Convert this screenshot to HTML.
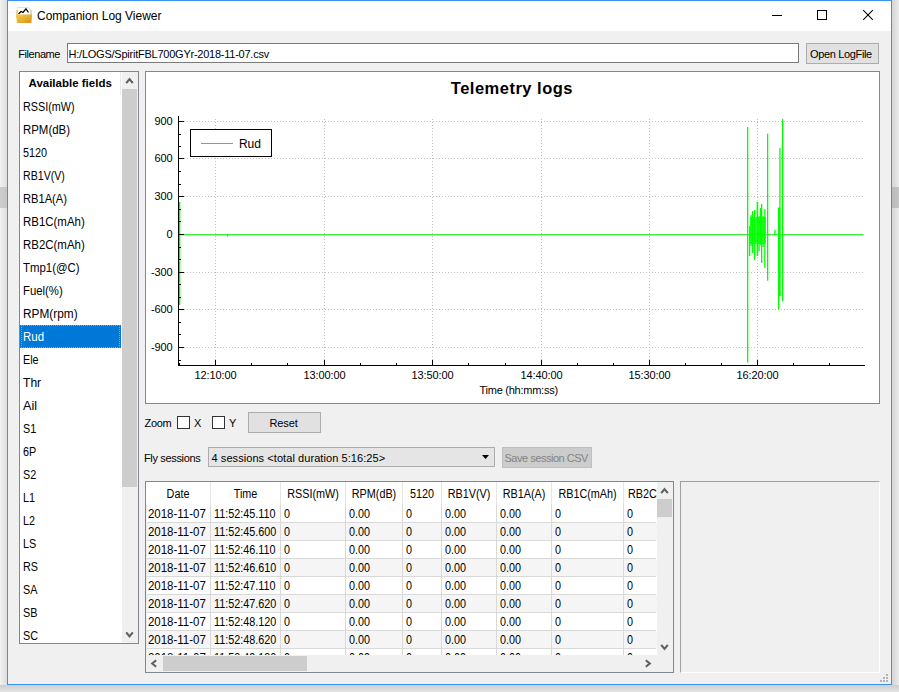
<!DOCTYPE html>
<html><head><meta charset="utf-8"><style>
html,body{margin:0;padding:0;width:899px;height:692px;overflow:hidden;position:relative;font-family:"Liberation Sans", sans-serif}
.t{position:absolute;white-space:nowrap;font-family:"Liberation Sans", sans-serif}
</style></head><body>
<div style="position:absolute;left:0;top:0;width:899px;height:692px;background:#e9e9e9"></div>
<div style="position:absolute;left:0;top:0;width:7px;height:692px;background:linear-gradient(to right,#f1f1f1,#dedede)"></div>
<div style="position:absolute;left:0;top:187px;width:7px;height:21px;background:linear-gradient(to right,#cdcdcd,#c6c6c6)"></div>
<div style="position:absolute;left:892px;top:0;width:7px;height:692px;background:linear-gradient(to right,#d4d4d4,#ebebeb)"></div>
<div style="position:absolute;left:892px;top:187px;width:7px;height:21px;background:linear-gradient(to right,#b8b8b8,#c6c6c6)"></div>
<div style="position:absolute;left:0;top:685px;width:899px;height:7px;background:linear-gradient(to bottom,#cecece,#e4e4e4)"></div>
<div style="position:absolute;left:7px;top:0px;width:885px;height:685px;background:#3a92f2"></div>
<div style="position:absolute;left:8px;top:1px;width:883px;height:30px;background:#fff"></div>
<div style="position:absolute;left:8px;top:31px;width:883px;height:653px;background:#f0f0f0"></div>
<svg style="position:absolute;left:14px;top:5px" width="20" height="20" viewBox="0 0 20 20">
<defs><linearGradient id="fg" x1="0" y1="0" x2="1" y2="1"><stop offset="0" stop-color="#f2d24a"/><stop offset="1" stop-color="#dc8f16"/></linearGradient></defs>
<rect x="2.5" y="5" width="15" height="8" fill="#e6a82a"/>
<path d="M3.5 2.5 H14.5 L16.5 5 V10 H3.5 Z" fill="#fff" stroke="#cfcfcf" stroke-width="0.6"/>
<path d="M4.5 9 L7 6.5 L9 7.5 L12 3.8 L14.5 7.5" fill="none" stroke="#000" stroke-width="1.2"/>
<path d="M2 9.5 H18 L17.4 18 H3 Z" fill="url(#fg)"/>
</svg>
<div class="t" style="left:37.00px;top:9.84px;font-size:12px;line-height:12px;font-weight:400;color:#000;letter-spacing:0px;">Companion Log Viewer</div>
<div style="position:absolute;left:772px;top:15px;width:10px;height:1px;background:#000"></div>
<div style="position:absolute;left:817px;top:10px;width:8px;height:8px;border:1px solid #000"></div>
<svg style="position:absolute;left:862px;top:9px" width="13" height="13" viewBox="0 0 13 13"><path d="M1.2 1.2 L10.8 10.8 M10.8 1.2 L1.2 10.8" stroke="#000" stroke-width="1.05"/></svg>
<div class="t" style="left:18.30px;top:48.69px;font-size:11px;line-height:11px;font-weight:400;color:#000;letter-spacing:-0.45px;">Filename</div>
<div style="position:absolute;left:67px;top:43px;width:730px;height:18px;background:#fff;border:1px solid #7a7a7a"></div>
<div class="t" style="left:68.60px;top:48.69px;font-size:11px;line-height:11px;font-weight:400;color:#000;letter-spacing:-0.24px;">H:/LOGS/SpiritFBL700GYr-2018-11-07.csv</div>
<div style="position:absolute;left:806px;top:43px;width:71px;height:19px;background:#e1e1e1;border:1px solid #adadad"></div>
<div class="t" style="left:810.00px;top:48.69px;font-size:11px;line-height:11px;font-weight:400;color:#000;letter-spacing:-0.35px;">Open LogFile</div>
<div style="position:absolute;left:19px;top:71px;width:118px;height:571px;background:#fff;border:1px solid #828790"></div>
<div class="t" style="left:28.50px;top:77.87px;font-size:11.5px;line-height:11.5px;font-weight:700;color:#000;letter-spacing:0px;">Available fields</div>
<div style="position:absolute;left:120px;top:72px;width:1px;height:23px;background:#e8e8e8"></div>
<div style="position:absolute;left:122px;top:72px;width:16px;height:571px;background:#f0f0f0"></div>
<div style="position:absolute;left:122px;top:89px;width:15px;height:398px;background:#cdcdcd"></div>
<div class="t" style="left:23.00px;top:100.64px;font-size:12px;line-height:12px;font-weight:400;color:#000;letter-spacing:0px;transform:scaleX(0.9);transform-origin:0 0;">RSSI(mW)</div>
<div class="t" style="left:23.00px;top:123.64px;font-size:12px;line-height:12px;font-weight:400;color:#000;letter-spacing:0px;transform:scaleX(0.9522);transform-origin:0 0;">RPM(dB)</div>
<div class="t" style="left:23.00px;top:146.64px;font-size:12px;line-height:12px;font-weight:400;color:#000;letter-spacing:0px;transform:scaleX(0.9);transform-origin:0 0;">5120</div>
<div class="t" style="left:23.00px;top:169.64px;font-size:12px;line-height:12px;font-weight:400;color:#000;letter-spacing:0px;transform:scaleX(0.8847);transform-origin:0 0;">RB1V(V)</div>
<div class="t" style="left:23.00px;top:192.64px;font-size:12px;line-height:12px;font-weight:400;color:#000;letter-spacing:0px;transform:scaleX(0.927);transform-origin:0 0;">RB1A(A)</div>
<div class="t" style="left:23.00px;top:215.64px;font-size:12px;line-height:12px;font-weight:400;color:#000;letter-spacing:0px;transform:scaleX(0.9540000000000001);transform-origin:0 0;">RB1C(mAh)</div>
<div class="t" style="left:23.00px;top:238.64px;font-size:12px;line-height:12px;font-weight:400;color:#000;letter-spacing:0px;transform:scaleX(0.9540000000000001);transform-origin:0 0;">RB2C(mAh)</div>
<div class="t" style="left:23.00px;top:261.64px;font-size:12px;line-height:12px;font-weight:400;color:#000;letter-spacing:0px;transform:scaleX(0.9512999999999999);transform-origin:0 0;">Tmp1(@C)</div>
<div class="t" style="left:23.00px;top:284.64px;font-size:12px;line-height:12px;font-weight:400;color:#000;letter-spacing:0px;transform:scaleX(0.9459);transform-origin:0 0;">Fuel(%)</div>
<div class="t" style="left:23.00px;top:307.64px;font-size:12px;line-height:12px;font-weight:400;color:#000;letter-spacing:0px;transform:scaleX(0.9864);transform-origin:0 0;">RPM(rpm)</div>
<div style="position:absolute;left:20px;top:325px;width:101px;height:23px;background:#0078d7"></div>
<div style="position:absolute;left:21px;top:325px;width:97px;height:21px;border:1px dotted #ff8a30"></div>
<div class="t" style="left:23.00px;top:330.64px;font-size:12px;line-height:12px;font-weight:400;color:#fff;letter-spacing:0px;transform:scaleX(0.9540000000000001);transform-origin:0 0;">Rud</div>
<div class="t" style="left:23.00px;top:353.64px;font-size:12px;line-height:12px;font-weight:400;color:#000;letter-spacing:0px;transform:scaleX(0.9);transform-origin:0 0;">Ele</div>
<div class="t" style="left:23.00px;top:376.64px;font-size:12px;line-height:12px;font-weight:400;color:#000;letter-spacing:0px;transform:scaleX(1.0080000000000002);transform-origin:0 0;">Thr</div>
<div class="t" style="left:23.00px;top:399.64px;font-size:12px;line-height:12px;font-weight:400;color:#000;letter-spacing:0px;transform:scaleX(1.053);transform-origin:0 0;">Ail</div>
<div class="t" style="left:23.00px;top:422.64px;font-size:12px;line-height:12px;font-weight:400;color:#000;letter-spacing:0px;transform:scaleX(0.9);transform-origin:0 0;">S1</div>
<div class="t" style="left:23.00px;top:445.64px;font-size:12px;line-height:12px;font-weight:400;color:#000;letter-spacing:0px;transform:scaleX(0.9);transform-origin:0 0;">6P</div>
<div class="t" style="left:23.00px;top:468.64px;font-size:12px;line-height:12px;font-weight:400;color:#000;letter-spacing:0px;transform:scaleX(0.9);transform-origin:0 0;">S2</div>
<div class="t" style="left:23.00px;top:491.64px;font-size:12px;line-height:12px;font-weight:400;color:#000;letter-spacing:0px;transform:scaleX(0.9);transform-origin:0 0;">L1</div>
<div class="t" style="left:23.00px;top:514.64px;font-size:12px;line-height:12px;font-weight:400;color:#000;letter-spacing:0px;transform:scaleX(0.9);transform-origin:0 0;">L2</div>
<div class="t" style="left:23.00px;top:537.64px;font-size:12px;line-height:12px;font-weight:400;color:#000;letter-spacing:0px;transform:scaleX(0.9);transform-origin:0 0;">LS</div>
<div class="t" style="left:23.00px;top:560.64px;font-size:12px;line-height:12px;font-weight:400;color:#000;letter-spacing:0px;transform:scaleX(0.9);transform-origin:0 0;">RS</div>
<div class="t" style="left:23.00px;top:583.64px;font-size:12px;line-height:12px;font-weight:400;color:#000;letter-spacing:0px;transform:scaleX(0.9);transform-origin:0 0;">SA</div>
<div class="t" style="left:23.00px;top:606.64px;font-size:12px;line-height:12px;font-weight:400;color:#000;letter-spacing:0px;transform:scaleX(0.9);transform-origin:0 0;">SB</div>
<div class="t" style="left:23.00px;top:629.64px;font-size:12px;line-height:12px;font-weight:400;color:#000;letter-spacing:0px;transform:scaleX(0.9);transform-origin:0 0;">SC</div>
<div style="position:absolute;left:145px;top:71px;width:733px;height:331px;background:#fff;border:1px solid #828790"></div>
<div class="t" style="left:450.80px;top:80.03px;font-size:16.5px;line-height:16.5px;font-weight:700;color:#000;letter-spacing:0.5px;">Telemetry logs</div>
<div style="position:absolute;left:181px;top:121px;width:683px;height:1px;background:repeating-linear-gradient(to right,#c0c0c0 0 1px,transparent 1px 3px)"></div>
<div style="position:absolute;left:181px;top:158px;width:683px;height:1px;background:repeating-linear-gradient(to right,#c0c0c0 0 1px,transparent 1px 3px)"></div>
<div style="position:absolute;left:181px;top:196px;width:683px;height:1px;background:repeating-linear-gradient(to right,#c0c0c0 0 1px,transparent 1px 3px)"></div>
<div style="position:absolute;left:181px;top:234px;width:683px;height:1px;background:repeating-linear-gradient(to right,#c0c0c0 0 1px,transparent 1px 3px)"></div>
<div style="position:absolute;left:181px;top:272px;width:683px;height:1px;background:repeating-linear-gradient(to right,#c0c0c0 0 1px,transparent 1px 3px)"></div>
<div style="position:absolute;left:181px;top:309px;width:683px;height:1px;background:repeating-linear-gradient(to right,#c0c0c0 0 1px,transparent 1px 3px)"></div>
<div style="position:absolute;left:181px;top:347px;width:683px;height:1px;background:repeating-linear-gradient(to right,#c0c0c0 0 1px,transparent 1px 3px)"></div>
<div style="position:absolute;left:215px;top:119px;width:1px;height:245px;background:repeating-linear-gradient(to bottom,#c0c0c0 0 1px,transparent 1px 3px)"></div>
<div style="position:absolute;left:324px;top:119px;width:1px;height:245px;background:repeating-linear-gradient(to bottom,#c0c0c0 0 1px,transparent 1px 3px)"></div>
<div style="position:absolute;left:432px;top:119px;width:1px;height:245px;background:repeating-linear-gradient(to bottom,#c0c0c0 0 1px,transparent 1px 3px)"></div>
<div style="position:absolute;left:541px;top:119px;width:1px;height:245px;background:repeating-linear-gradient(to bottom,#c0c0c0 0 1px,transparent 1px 3px)"></div>
<div style="position:absolute;left:649px;top:119px;width:1px;height:245px;background:repeating-linear-gradient(to bottom,#c0c0c0 0 1px,transparent 1px 3px)"></div>
<div style="position:absolute;left:757px;top:119px;width:1px;height:245px;background:repeating-linear-gradient(to bottom,#c0c0c0 0 1px,transparent 1px 3px)"></div>
<svg style="position:absolute;left:0;top:0" width="899" height="692"><rect x="179" y="234" width="684.6" height="1" fill="#3eec3e"/><rect x="179" y="235" width="684.6" height="1" fill="#00ff00" fill-opacity="0.3"/><rect x="179" y="202" width="1.3" height="103" fill="#00ff00"/><rect x="227" y="234" width="1.3" height="2.5" fill="#00ff00"/><rect x="747.0" y="127" width="1.3" height="235.5" fill="#00ff00"/><rect x="749.1" y="226" width="0.75" height="18" fill="#00ff00"/><rect x="750.1" y="217" width="0.75" height="27" fill="#00ff00"/><rect x="751.1" y="217" width="0.75" height="27" fill="#00ff00"/><rect x="752.1" y="217" width="0.75" height="27" fill="#00ff00"/><rect x="753.1" y="217" width="0.75" height="27" fill="#00ff00"/><rect x="754.1" y="217" width="0.75" height="27" fill="#00ff00"/><rect x="755.1" y="217" width="0.75" height="27" fill="#00ff00"/><rect x="756.1" y="217" width="0.75" height="27" fill="#00ff00"/><rect x="757.1" y="217" width="0.75" height="27" fill="#00ff00"/><rect x="758.1" y="217" width="0.75" height="27" fill="#00ff00"/><rect x="759.1" y="217" width="0.75" height="27" fill="#00ff00"/><rect x="760.1" y="217" width="0.75" height="27" fill="#00ff00"/><rect x="761.1" y="217" width="0.75" height="27" fill="#00ff00"/><rect x="762.1" y="217" width="0.75" height="27" fill="#00ff00"/><rect x="763.1" y="217" width="0.75" height="27" fill="#00ff00"/><rect x="764.1" y="217" width="0.75" height="27" fill="#00ff00"/><rect x="765.1" y="217" width="0.75" height="27" fill="#00ff00"/><rect x="749.0" y="226" width="1.3" height="30" fill="#00ff00"/><rect x="750.5" y="215" width="1.3" height="31" fill="#00ff00"/><rect x="752.0" y="211" width="1.3" height="42" fill="#00ff00"/><rect x="754.0" y="210" width="1.3" height="50" fill="#00ff00"/><rect x="756.6" y="202" width="1.6" height="54" fill="#00ff00"/><rect x="758.4" y="216" width="1.3" height="35" fill="#00ff00"/><rect x="760.0" y="208" width="1.3" height="37" fill="#00ff00"/><rect x="761.0" y="204" width="1.3" height="59" fill="#00ff00"/><rect x="762.5" y="216" width="1.3" height="31" fill="#00ff00"/><rect x="764.2" y="209" width="1.3" height="59" fill="#00ff00"/><rect x="767.0" y="133.6" width="1.3" height="147.1" fill="#00ff00"/><rect x="774.3" y="230" width="1.3" height="5" fill="#00ff00"/><rect x="778.0" y="207.7" width="2.3" height="88.30000000000001" fill="#00ff00"/><rect x="778.0" y="207.7" width="1.3" height="101.80000000000001" fill="#00ff00"/><rect x="779.3" y="148" width="1.3" height="148" fill="#00ff00"/><rect x="782.0" y="119" width="1.3" height="182" fill="#00ff00"/></svg>
<div style="position:absolute;left:178px;top:116px;width:1px;height:250px;background:#000"></div>
<div style="position:absolute;left:178px;top:365px;width:687px;height:1px;background:#000"></div>
<div style="position:absolute;left:179px;top:121px;width:5px;height:1px;background:#000"></div>
<div class="t" style="left:72.60px;width:100px;text-align:right;top:116.49px;font-size:11px;line-height:11px;font-weight:400;color:#000;letter-spacing:-0.1px;">900</div>
<div style="position:absolute;left:179px;top:158px;width:5px;height:1px;background:#000"></div>
<div class="t" style="left:72.60px;width:100px;text-align:right;top:153.49px;font-size:11px;line-height:11px;font-weight:400;color:#000;letter-spacing:-0.1px;">600</div>
<div style="position:absolute;left:179px;top:196px;width:5px;height:1px;background:#000"></div>
<div class="t" style="left:72.60px;width:100px;text-align:right;top:191.49px;font-size:11px;line-height:11px;font-weight:400;color:#000;letter-spacing:-0.1px;">300</div>
<div style="position:absolute;left:179px;top:234px;width:5px;height:1px;background:#000"></div>
<div class="t" style="left:72.60px;width:100px;text-align:right;top:229.49px;font-size:11px;line-height:11px;font-weight:400;color:#000;letter-spacing:-0.1px;">0</div>
<div style="position:absolute;left:179px;top:272px;width:5px;height:1px;background:#000"></div>
<div class="t" style="left:72.60px;width:100px;text-align:right;top:267.49px;font-size:11px;line-height:11px;font-weight:400;color:#000;letter-spacing:-0.1px;">-300</div>
<div style="position:absolute;left:179px;top:309px;width:5px;height:1px;background:#000"></div>
<div class="t" style="left:72.60px;width:100px;text-align:right;top:304.49px;font-size:11px;line-height:11px;font-weight:400;color:#000;letter-spacing:-0.1px;">-600</div>
<div style="position:absolute;left:179px;top:347px;width:5px;height:1px;background:#000"></div>
<div class="t" style="left:72.60px;width:100px;text-align:right;top:342.49px;font-size:11px;line-height:11px;font-weight:400;color:#000;letter-spacing:-0.1px;">-900</div>
<div style="position:absolute;left:179px;top:360px;width:2px;height:1px;background:#000"></div>
<div style="position:absolute;left:179px;top:334px;width:2px;height:1px;background:#000"></div>
<div style="position:absolute;left:179px;top:322px;width:2px;height:1px;background:#000"></div>
<div style="position:absolute;left:179px;top:297px;width:2px;height:1px;background:#000"></div>
<div style="position:absolute;left:179px;top:284px;width:2px;height:1px;background:#000"></div>
<div style="position:absolute;left:179px;top:259px;width:2px;height:1px;background:#000"></div>
<div style="position:absolute;left:179px;top:247px;width:2px;height:1px;background:#000"></div>
<div style="position:absolute;left:179px;top:221px;width:2px;height:1px;background:#000"></div>
<div style="position:absolute;left:179px;top:209px;width:2px;height:1px;background:#000"></div>
<div style="position:absolute;left:179px;top:184px;width:2px;height:1px;background:#000"></div>
<div style="position:absolute;left:179px;top:171px;width:2px;height:1px;background:#000"></div>
<div style="position:absolute;left:179px;top:146px;width:2px;height:1px;background:#000"></div>
<div style="position:absolute;left:179px;top:134px;width:2px;height:1px;background:#000"></div>
<div style="position:absolute;left:215px;top:360px;width:1px;height:5px;background:#000"></div>
<div class="t" style="left:115.50px;width:200px;text-align:center;top:369.69px;font-size:11px;line-height:11px;font-weight:400;color:#000;letter-spacing:-0.1px;">12:10:00</div>
<div style="position:absolute;left:324px;top:360px;width:1px;height:5px;background:#000"></div>
<div class="t" style="left:224.50px;width:200px;text-align:center;top:369.69px;font-size:11px;line-height:11px;font-weight:400;color:#000;letter-spacing:-0.1px;">13:00:00</div>
<div style="position:absolute;left:432px;top:360px;width:1px;height:5px;background:#000"></div>
<div class="t" style="left:332.50px;width:200px;text-align:center;top:369.69px;font-size:11px;line-height:11px;font-weight:400;color:#000;letter-spacing:-0.1px;">13:50:00</div>
<div style="position:absolute;left:541px;top:360px;width:1px;height:5px;background:#000"></div>
<div class="t" style="left:441.50px;width:200px;text-align:center;top:369.69px;font-size:11px;line-height:11px;font-weight:400;color:#000;letter-spacing:-0.1px;">14:40:00</div>
<div style="position:absolute;left:649px;top:360px;width:1px;height:5px;background:#000"></div>
<div class="t" style="left:549.50px;width:200px;text-align:center;top:369.69px;font-size:11px;line-height:11px;font-weight:400;color:#000;letter-spacing:-0.1px;">15:30:00</div>
<div style="position:absolute;left:757px;top:360px;width:1px;height:5px;background:#000"></div>
<div class="t" style="left:657.50px;width:200px;text-align:center;top:369.69px;font-size:11px;line-height:11px;font-weight:400;color:#000;letter-spacing:-0.1px;">16:20:00</div>
<div style="position:absolute;left:179px;top:363px;width:1px;height:2px;background:#000"></div>
<div style="position:absolute;left:251px;top:363px;width:1px;height:2px;background:#000"></div>
<div style="position:absolute;left:287px;top:363px;width:1px;height:2px;background:#000"></div>
<div style="position:absolute;left:360px;top:363px;width:1px;height:2px;background:#000"></div>
<div style="position:absolute;left:396px;top:363px;width:1px;height:2px;background:#000"></div>
<div style="position:absolute;left:468px;top:363px;width:1px;height:2px;background:#000"></div>
<div style="position:absolute;left:505px;top:363px;width:1px;height:2px;background:#000"></div>
<div style="position:absolute;left:577px;top:363px;width:1px;height:2px;background:#000"></div>
<div style="position:absolute;left:613px;top:363px;width:1px;height:2px;background:#000"></div>
<div style="position:absolute;left:685px;top:363px;width:1px;height:2px;background:#000"></div>
<div style="position:absolute;left:721px;top:363px;width:1px;height:2px;background:#000"></div>
<div style="position:absolute;left:793px;top:363px;width:1px;height:2px;background:#000"></div>
<div style="position:absolute;left:829px;top:363px;width:1px;height:2px;background:#000"></div>
<div class="t" style="left:479.50px;top:385.29px;font-size:11px;line-height:11px;font-weight:400;color:#000;letter-spacing:-0.25px;">Time (hh:mm:ss)</div>
<div style="position:absolute;left:190px;top:129px;width:80px;height:26px;border:1px solid #000;background:#fff"></div>
<div style="position:absolute;left:201px;top:143px;width:32px;height:1px;background:#00ff00"></div>
<div class="t" style="left:239.00px;top:137.84px;font-size:12px;line-height:12px;font-weight:400;color:#000;letter-spacing:-0.1px;">Rud</div>
<div class="t" style="left:144.50px;top:418.09px;font-size:11px;line-height:11px;font-weight:400;color:#000;letter-spacing:-0.3px;">Zoom</div>
<div style="position:absolute;left:177px;top:416px;width:11px;height:11px;background:#fff;border:1px solid #333"></div>
<div class="t" style="left:194.00px;top:418.09px;font-size:11px;line-height:11px;font-weight:400;color:#000;letter-spacing:0px;">X</div>
<div style="position:absolute;left:212px;top:416px;width:11px;height:11px;background:#fff;border:1px solid #333"></div>
<div class="t" style="left:229.00px;top:418.09px;font-size:11px;line-height:11px;font-weight:400;color:#000;letter-spacing:0px;">Y</div>
<div style="position:absolute;left:248px;top:412px;width:71px;height:19px;background:#e1e1e1;border:1px solid #adadad"></div>
<div class="t" style="left:269.50px;top:418.09px;font-size:11px;line-height:11px;font-weight:400;color:#000;letter-spacing:-0.1px;">Reset</div>
<div class="t" style="left:144.00px;top:453.09px;font-size:11px;line-height:11px;font-weight:400;color:#000;letter-spacing:-0.35px;">Fly sessions</div>
<div style="position:absolute;left:208px;top:447px;width:285px;height:18px;background:#e5e5e5;border:1px solid #acacac"></div>
<div class="t" style="left:211.50px;top:453.09px;font-size:11px;line-height:11px;font-weight:400;color:#000;letter-spacing:0.07px;">4 sessions &lt;total duration 5:16:25&gt;</div>
<svg style="position:absolute;left:482px;top:455px" width="7" height="4" viewBox="0 0 7 4"><path d="M0 0 H7 L3.5 4 Z" fill="#000"/></svg>
<div style="position:absolute;left:502px;top:447px;width:88px;height:19px;background:#cccccc;border:1px solid #bfbfbf"></div>
<div class="t" style="left:504.50px;top:452.89px;font-size:11px;line-height:11px;font-weight:400;color:#838383;letter-spacing:-0.48px;">Save session CSV</div>
<div style="position:absolute;left:145px;top:481px;width:527px;height:190px;background:#fff;border:1px solid #828790"></div>
<div style="position:absolute;left:146px;top:482px;width:511px;height:173px;overflow:hidden">
<div style="position:absolute;left:1px;top:23px;width:510px;height:17px;background:#fff"></div>
<div style="position:absolute;left:0px;top:40px;width:510px;height:1px;background:#d9d9d9"></div>
<div style="position:absolute;left:1px;top:41px;width:510px;height:17px;background:#f5f5f5"></div>
<div style="position:absolute;left:0px;top:58px;width:510px;height:1px;background:#d9d9d9"></div>
<div style="position:absolute;left:1px;top:59px;width:510px;height:17px;background:#fff"></div>
<div style="position:absolute;left:0px;top:76px;width:510px;height:1px;background:#d9d9d9"></div>
<div style="position:absolute;left:1px;top:77px;width:510px;height:17px;background:#f5f5f5"></div>
<div style="position:absolute;left:0px;top:94px;width:510px;height:1px;background:#d9d9d9"></div>
<div style="position:absolute;left:1px;top:95px;width:510px;height:17px;background:#fff"></div>
<div style="position:absolute;left:0px;top:112px;width:510px;height:1px;background:#d9d9d9"></div>
<div style="position:absolute;left:1px;top:113px;width:510px;height:17px;background:#f5f5f5"></div>
<div style="position:absolute;left:0px;top:130px;width:510px;height:1px;background:#d9d9d9"></div>
<div style="position:absolute;left:1px;top:131px;width:510px;height:17px;background:#fff"></div>
<div style="position:absolute;left:0px;top:148px;width:510px;height:1px;background:#d9d9d9"></div>
<div style="position:absolute;left:1px;top:149px;width:510px;height:17px;background:#f5f5f5"></div>
<div style="position:absolute;left:0px;top:166px;width:510px;height:1px;background:#d9d9d9"></div>
<div style="position:absolute;left:1px;top:167px;width:510px;height:17px;background:#fff"></div>
<div style="position:absolute;left:0px;top:184px;width:510px;height:1px;background:#d9d9d9"></div>
<div style="position:absolute;left:64px;top:0px;width:1px;height:23px;background:#e5e5e5"></div>
<div style="position:absolute;left:64px;top:23px;width:1px;height:150px;background:#d9d9d9"></div>
<div style="position:absolute;left:134px;top:0px;width:1px;height:23px;background:#e5e5e5"></div>
<div style="position:absolute;left:134px;top:23px;width:1px;height:150px;background:#d9d9d9"></div>
<div style="position:absolute;left:199px;top:0px;width:1px;height:23px;background:#e5e5e5"></div>
<div style="position:absolute;left:199px;top:23px;width:1px;height:150px;background:#d9d9d9"></div>
<div style="position:absolute;left:256px;top:0px;width:1px;height:23px;background:#e5e5e5"></div>
<div style="position:absolute;left:256px;top:23px;width:1px;height:150px;background:#d9d9d9"></div>
<div style="position:absolute;left:295px;top:0px;width:1px;height:23px;background:#e5e5e5"></div>
<div style="position:absolute;left:295px;top:23px;width:1px;height:150px;background:#d9d9d9"></div>
<div style="position:absolute;left:350px;top:0px;width:1px;height:23px;background:#e5e5e5"></div>
<div style="position:absolute;left:350px;top:23px;width:1px;height:150px;background:#d9d9d9"></div>
<div style="position:absolute;left:405px;top:0px;width:1px;height:23px;background:#e5e5e5"></div>
<div style="position:absolute;left:405px;top:23px;width:1px;height:150px;background:#d9d9d9"></div>
<div style="position:absolute;left:477px;top:0px;width:1px;height:23px;background:#e5e5e5"></div>
<div style="position:absolute;left:477px;top:23px;width:1px;height:150px;background:#d9d9d9"></div>
<div style="position:absolute;left:0px;top:23px;width:1px;height:150px;background:#ececec"></div>
<div class="t" style="left:-20.00px;width:104px;text-align:center;top:5.84px;font-size:12px;line-height:12px;font-weight:400;color:#000;letter-spacing:0px;transform:scaleX(0.9);transform-origin:50% 0;">Date</div>
<div class="t" style="left:45.00px;width:109px;text-align:center;top:5.84px;font-size:12px;line-height:12px;font-weight:400;color:#000;letter-spacing:0px;transform:scaleX(0.9);transform-origin:50% 0;">Time</div>
<div class="t" style="left:115.00px;width:104px;text-align:center;top:5.84px;font-size:12px;line-height:12px;font-weight:400;color:#000;letter-spacing:0px;transform:scaleX(0.9);transform-origin:50% 0;">RSSI(mW)</div>
<div class="t" style="left:180.00px;width:96px;text-align:center;top:5.84px;font-size:12px;line-height:12px;font-weight:400;color:#000;letter-spacing:0px;transform:scaleX(0.9);transform-origin:50% 0;">RPM(dB)</div>
<div class="t" style="left:237.00px;width:78px;text-align:center;top:5.84px;font-size:12px;line-height:12px;font-weight:400;color:#000;letter-spacing:0px;transform:scaleX(0.9);transform-origin:50% 0;">5120</div>
<div class="t" style="left:276.00px;width:94px;text-align:center;top:5.84px;font-size:12px;line-height:12px;font-weight:400;color:#000;letter-spacing:0px;transform:scaleX(0.9);transform-origin:50% 0;">RB1V(V)</div>
<div class="t" style="left:331.00px;width:94px;text-align:center;top:5.84px;font-size:12px;line-height:12px;font-weight:400;color:#000;letter-spacing:0px;transform:scaleX(0.9);transform-origin:50% 0;">RB1A(A)</div>
<div class="t" style="left:386.00px;width:111px;text-align:center;top:5.84px;font-size:12px;line-height:12px;font-weight:400;color:#000;letter-spacing:0px;transform:scaleX(0.9);transform-origin:50% 0;">RB1C(mAh)</div>
<div class="t" style="left:482.40px;top:5.84px;font-size:12px;line-height:12px;font-weight:400;color:#000;letter-spacing:0px;transform:scaleX(0.9);transform-origin:0 0;">RB2C(mAh)</div>
<div class="t" style="left:1.80px;top:25.84px;font-size:12px;line-height:12px;font-weight:400;color:#000;letter-spacing:0px;transform:scaleX(0.955);transform-origin:0 0;">2018-11-07</div>
<div class="t" style="left:67.60px;top:25.84px;font-size:12px;line-height:12px;font-weight:400;color:#000;letter-spacing:0px;transform:scaleX(0.9);transform-origin:0 0;">11:52:45.110</div>
<div class="t" style="left:137.60px;top:25.84px;font-size:12px;line-height:12px;font-weight:400;color:#000;letter-spacing:0px;transform:scaleX(0.9);transform-origin:0 0;">0</div>
<div class="t" style="left:202.60px;top:25.84px;font-size:12px;line-height:12px;font-weight:400;color:#000;letter-spacing:0px;transform:scaleX(0.9);transform-origin:0 0;">0.00</div>
<div class="t" style="left:259.60px;top:25.84px;font-size:12px;line-height:12px;font-weight:400;color:#000;letter-spacing:0px;transform:scaleX(0.9);transform-origin:0 0;">0</div>
<div class="t" style="left:298.60px;top:25.84px;font-size:12px;line-height:12px;font-weight:400;color:#000;letter-spacing:0px;transform:scaleX(0.9);transform-origin:0 0;">0.00</div>
<div class="t" style="left:353.60px;top:25.84px;font-size:12px;line-height:12px;font-weight:400;color:#000;letter-spacing:0px;transform:scaleX(0.9);transform-origin:0 0;">0.00</div>
<div class="t" style="left:408.60px;top:25.84px;font-size:12px;line-height:12px;font-weight:400;color:#000;letter-spacing:0px;transform:scaleX(0.9);transform-origin:0 0;">0</div>
<div class="t" style="left:480.60px;top:25.84px;font-size:12px;line-height:12px;font-weight:400;color:#000;letter-spacing:0px;transform:scaleX(0.9);transform-origin:0 0;">0</div>
<div class="t" style="left:1.80px;top:43.84px;font-size:12px;line-height:12px;font-weight:400;color:#000;letter-spacing:0px;transform:scaleX(0.955);transform-origin:0 0;">2018-11-07</div>
<div class="t" style="left:67.60px;top:43.84px;font-size:12px;line-height:12px;font-weight:400;color:#000;letter-spacing:0px;transform:scaleX(0.9);transform-origin:0 0;">11:52:45.600</div>
<div class="t" style="left:137.60px;top:43.84px;font-size:12px;line-height:12px;font-weight:400;color:#000;letter-spacing:0px;transform:scaleX(0.9);transform-origin:0 0;">0</div>
<div class="t" style="left:202.60px;top:43.84px;font-size:12px;line-height:12px;font-weight:400;color:#000;letter-spacing:0px;transform:scaleX(0.9);transform-origin:0 0;">0.00</div>
<div class="t" style="left:259.60px;top:43.84px;font-size:12px;line-height:12px;font-weight:400;color:#000;letter-spacing:0px;transform:scaleX(0.9);transform-origin:0 0;">0</div>
<div class="t" style="left:298.60px;top:43.84px;font-size:12px;line-height:12px;font-weight:400;color:#000;letter-spacing:0px;transform:scaleX(0.9);transform-origin:0 0;">0.00</div>
<div class="t" style="left:353.60px;top:43.84px;font-size:12px;line-height:12px;font-weight:400;color:#000;letter-spacing:0px;transform:scaleX(0.9);transform-origin:0 0;">0.00</div>
<div class="t" style="left:408.60px;top:43.84px;font-size:12px;line-height:12px;font-weight:400;color:#000;letter-spacing:0px;transform:scaleX(0.9);transform-origin:0 0;">0</div>
<div class="t" style="left:480.60px;top:43.84px;font-size:12px;line-height:12px;font-weight:400;color:#000;letter-spacing:0px;transform:scaleX(0.9);transform-origin:0 0;">0</div>
<div class="t" style="left:1.80px;top:61.84px;font-size:12px;line-height:12px;font-weight:400;color:#000;letter-spacing:0px;transform:scaleX(0.955);transform-origin:0 0;">2018-11-07</div>
<div class="t" style="left:67.60px;top:61.84px;font-size:12px;line-height:12px;font-weight:400;color:#000;letter-spacing:0px;transform:scaleX(0.9);transform-origin:0 0;">11:52:46.110</div>
<div class="t" style="left:137.60px;top:61.84px;font-size:12px;line-height:12px;font-weight:400;color:#000;letter-spacing:0px;transform:scaleX(0.9);transform-origin:0 0;">0</div>
<div class="t" style="left:202.60px;top:61.84px;font-size:12px;line-height:12px;font-weight:400;color:#000;letter-spacing:0px;transform:scaleX(0.9);transform-origin:0 0;">0.00</div>
<div class="t" style="left:259.60px;top:61.84px;font-size:12px;line-height:12px;font-weight:400;color:#000;letter-spacing:0px;transform:scaleX(0.9);transform-origin:0 0;">0</div>
<div class="t" style="left:298.60px;top:61.84px;font-size:12px;line-height:12px;font-weight:400;color:#000;letter-spacing:0px;transform:scaleX(0.9);transform-origin:0 0;">0.00</div>
<div class="t" style="left:353.60px;top:61.84px;font-size:12px;line-height:12px;font-weight:400;color:#000;letter-spacing:0px;transform:scaleX(0.9);transform-origin:0 0;">0.00</div>
<div class="t" style="left:408.60px;top:61.84px;font-size:12px;line-height:12px;font-weight:400;color:#000;letter-spacing:0px;transform:scaleX(0.9);transform-origin:0 0;">0</div>
<div class="t" style="left:480.60px;top:61.84px;font-size:12px;line-height:12px;font-weight:400;color:#000;letter-spacing:0px;transform:scaleX(0.9);transform-origin:0 0;">0</div>
<div class="t" style="left:1.80px;top:79.84px;font-size:12px;line-height:12px;font-weight:400;color:#000;letter-spacing:0px;transform:scaleX(0.955);transform-origin:0 0;">2018-11-07</div>
<div class="t" style="left:67.60px;top:79.84px;font-size:12px;line-height:12px;font-weight:400;color:#000;letter-spacing:0px;transform:scaleX(0.9);transform-origin:0 0;">11:52:46.610</div>
<div class="t" style="left:137.60px;top:79.84px;font-size:12px;line-height:12px;font-weight:400;color:#000;letter-spacing:0px;transform:scaleX(0.9);transform-origin:0 0;">0</div>
<div class="t" style="left:202.60px;top:79.84px;font-size:12px;line-height:12px;font-weight:400;color:#000;letter-spacing:0px;transform:scaleX(0.9);transform-origin:0 0;">0.00</div>
<div class="t" style="left:259.60px;top:79.84px;font-size:12px;line-height:12px;font-weight:400;color:#000;letter-spacing:0px;transform:scaleX(0.9);transform-origin:0 0;">0</div>
<div class="t" style="left:298.60px;top:79.84px;font-size:12px;line-height:12px;font-weight:400;color:#000;letter-spacing:0px;transform:scaleX(0.9);transform-origin:0 0;">0.00</div>
<div class="t" style="left:353.60px;top:79.84px;font-size:12px;line-height:12px;font-weight:400;color:#000;letter-spacing:0px;transform:scaleX(0.9);transform-origin:0 0;">0.00</div>
<div class="t" style="left:408.60px;top:79.84px;font-size:12px;line-height:12px;font-weight:400;color:#000;letter-spacing:0px;transform:scaleX(0.9);transform-origin:0 0;">0</div>
<div class="t" style="left:480.60px;top:79.84px;font-size:12px;line-height:12px;font-weight:400;color:#000;letter-spacing:0px;transform:scaleX(0.9);transform-origin:0 0;">0</div>
<div class="t" style="left:1.80px;top:97.84px;font-size:12px;line-height:12px;font-weight:400;color:#000;letter-spacing:0px;transform:scaleX(0.955);transform-origin:0 0;">2018-11-07</div>
<div class="t" style="left:67.60px;top:97.84px;font-size:12px;line-height:12px;font-weight:400;color:#000;letter-spacing:0px;transform:scaleX(0.9);transform-origin:0 0;">11:52:47.110</div>
<div class="t" style="left:137.60px;top:97.84px;font-size:12px;line-height:12px;font-weight:400;color:#000;letter-spacing:0px;transform:scaleX(0.9);transform-origin:0 0;">0</div>
<div class="t" style="left:202.60px;top:97.84px;font-size:12px;line-height:12px;font-weight:400;color:#000;letter-spacing:0px;transform:scaleX(0.9);transform-origin:0 0;">0.00</div>
<div class="t" style="left:259.60px;top:97.84px;font-size:12px;line-height:12px;font-weight:400;color:#000;letter-spacing:0px;transform:scaleX(0.9);transform-origin:0 0;">0</div>
<div class="t" style="left:298.60px;top:97.84px;font-size:12px;line-height:12px;font-weight:400;color:#000;letter-spacing:0px;transform:scaleX(0.9);transform-origin:0 0;">0.00</div>
<div class="t" style="left:353.60px;top:97.84px;font-size:12px;line-height:12px;font-weight:400;color:#000;letter-spacing:0px;transform:scaleX(0.9);transform-origin:0 0;">0.00</div>
<div class="t" style="left:408.60px;top:97.84px;font-size:12px;line-height:12px;font-weight:400;color:#000;letter-spacing:0px;transform:scaleX(0.9);transform-origin:0 0;">0</div>
<div class="t" style="left:480.60px;top:97.84px;font-size:12px;line-height:12px;font-weight:400;color:#000;letter-spacing:0px;transform:scaleX(0.9);transform-origin:0 0;">0</div>
<div class="t" style="left:1.80px;top:115.84px;font-size:12px;line-height:12px;font-weight:400;color:#000;letter-spacing:0px;transform:scaleX(0.955);transform-origin:0 0;">2018-11-07</div>
<div class="t" style="left:67.60px;top:115.84px;font-size:12px;line-height:12px;font-weight:400;color:#000;letter-spacing:0px;transform:scaleX(0.9);transform-origin:0 0;">11:52:47.620</div>
<div class="t" style="left:137.60px;top:115.84px;font-size:12px;line-height:12px;font-weight:400;color:#000;letter-spacing:0px;transform:scaleX(0.9);transform-origin:0 0;">0</div>
<div class="t" style="left:202.60px;top:115.84px;font-size:12px;line-height:12px;font-weight:400;color:#000;letter-spacing:0px;transform:scaleX(0.9);transform-origin:0 0;">0.00</div>
<div class="t" style="left:259.60px;top:115.84px;font-size:12px;line-height:12px;font-weight:400;color:#000;letter-spacing:0px;transform:scaleX(0.9);transform-origin:0 0;">0</div>
<div class="t" style="left:298.60px;top:115.84px;font-size:12px;line-height:12px;font-weight:400;color:#000;letter-spacing:0px;transform:scaleX(0.9);transform-origin:0 0;">0.00</div>
<div class="t" style="left:353.60px;top:115.84px;font-size:12px;line-height:12px;font-weight:400;color:#000;letter-spacing:0px;transform:scaleX(0.9);transform-origin:0 0;">0.00</div>
<div class="t" style="left:408.60px;top:115.84px;font-size:12px;line-height:12px;font-weight:400;color:#000;letter-spacing:0px;transform:scaleX(0.9);transform-origin:0 0;">0</div>
<div class="t" style="left:480.60px;top:115.84px;font-size:12px;line-height:12px;font-weight:400;color:#000;letter-spacing:0px;transform:scaleX(0.9);transform-origin:0 0;">0</div>
<div class="t" style="left:1.80px;top:133.84px;font-size:12px;line-height:12px;font-weight:400;color:#000;letter-spacing:0px;transform:scaleX(0.955);transform-origin:0 0;">2018-11-07</div>
<div class="t" style="left:67.60px;top:133.84px;font-size:12px;line-height:12px;font-weight:400;color:#000;letter-spacing:0px;transform:scaleX(0.9);transform-origin:0 0;">11:52:48.120</div>
<div class="t" style="left:137.60px;top:133.84px;font-size:12px;line-height:12px;font-weight:400;color:#000;letter-spacing:0px;transform:scaleX(0.9);transform-origin:0 0;">0</div>
<div class="t" style="left:202.60px;top:133.84px;font-size:12px;line-height:12px;font-weight:400;color:#000;letter-spacing:0px;transform:scaleX(0.9);transform-origin:0 0;">0.00</div>
<div class="t" style="left:259.60px;top:133.84px;font-size:12px;line-height:12px;font-weight:400;color:#000;letter-spacing:0px;transform:scaleX(0.9);transform-origin:0 0;">0</div>
<div class="t" style="left:298.60px;top:133.84px;font-size:12px;line-height:12px;font-weight:400;color:#000;letter-spacing:0px;transform:scaleX(0.9);transform-origin:0 0;">0.00</div>
<div class="t" style="left:353.60px;top:133.84px;font-size:12px;line-height:12px;font-weight:400;color:#000;letter-spacing:0px;transform:scaleX(0.9);transform-origin:0 0;">0.00</div>
<div class="t" style="left:408.60px;top:133.84px;font-size:12px;line-height:12px;font-weight:400;color:#000;letter-spacing:0px;transform:scaleX(0.9);transform-origin:0 0;">0</div>
<div class="t" style="left:480.60px;top:133.84px;font-size:12px;line-height:12px;font-weight:400;color:#000;letter-spacing:0px;transform:scaleX(0.9);transform-origin:0 0;">0</div>
<div class="t" style="left:1.80px;top:151.84px;font-size:12px;line-height:12px;font-weight:400;color:#000;letter-spacing:0px;transform:scaleX(0.955);transform-origin:0 0;">2018-11-07</div>
<div class="t" style="left:67.60px;top:151.84px;font-size:12px;line-height:12px;font-weight:400;color:#000;letter-spacing:0px;transform:scaleX(0.9);transform-origin:0 0;">11:52:48.620</div>
<div class="t" style="left:137.60px;top:151.84px;font-size:12px;line-height:12px;font-weight:400;color:#000;letter-spacing:0px;transform:scaleX(0.9);transform-origin:0 0;">0</div>
<div class="t" style="left:202.60px;top:151.84px;font-size:12px;line-height:12px;font-weight:400;color:#000;letter-spacing:0px;transform:scaleX(0.9);transform-origin:0 0;">0.00</div>
<div class="t" style="left:259.60px;top:151.84px;font-size:12px;line-height:12px;font-weight:400;color:#000;letter-spacing:0px;transform:scaleX(0.9);transform-origin:0 0;">0</div>
<div class="t" style="left:298.60px;top:151.84px;font-size:12px;line-height:12px;font-weight:400;color:#000;letter-spacing:0px;transform:scaleX(0.9);transform-origin:0 0;">0.00</div>
<div class="t" style="left:353.60px;top:151.84px;font-size:12px;line-height:12px;font-weight:400;color:#000;letter-spacing:0px;transform:scaleX(0.9);transform-origin:0 0;">0.00</div>
<div class="t" style="left:408.60px;top:151.84px;font-size:12px;line-height:12px;font-weight:400;color:#000;letter-spacing:0px;transform:scaleX(0.9);transform-origin:0 0;">0</div>
<div class="t" style="left:480.60px;top:151.84px;font-size:12px;line-height:12px;font-weight:400;color:#000;letter-spacing:0px;transform:scaleX(0.9);transform-origin:0 0;">0</div>
<div class="t" style="left:1.80px;top:169.84px;font-size:12px;line-height:12px;font-weight:400;color:#000;letter-spacing:0px;transform:scaleX(0.955);transform-origin:0 0;">2018-11-07</div>
<div class="t" style="left:67.60px;top:169.84px;font-size:12px;line-height:12px;font-weight:400;color:#000;letter-spacing:0px;transform:scaleX(0.9);transform-origin:0 0;">11:52:49.130</div>
<div class="t" style="left:137.60px;top:169.84px;font-size:12px;line-height:12px;font-weight:400;color:#000;letter-spacing:0px;transform:scaleX(0.9);transform-origin:0 0;">0</div>
<div class="t" style="left:202.60px;top:169.84px;font-size:12px;line-height:12px;font-weight:400;color:#000;letter-spacing:0px;transform:scaleX(0.9);transform-origin:0 0;">0.00</div>
<div class="t" style="left:259.60px;top:169.84px;font-size:12px;line-height:12px;font-weight:400;color:#000;letter-spacing:0px;transform:scaleX(0.9);transform-origin:0 0;">0</div>
<div class="t" style="left:298.60px;top:169.84px;font-size:12px;line-height:12px;font-weight:400;color:#000;letter-spacing:0px;transform:scaleX(0.9);transform-origin:0 0;">0.00</div>
<div class="t" style="left:353.60px;top:169.84px;font-size:12px;line-height:12px;font-weight:400;color:#000;letter-spacing:0px;transform:scaleX(0.9);transform-origin:0 0;">0.00</div>
<div class="t" style="left:408.60px;top:169.84px;font-size:12px;line-height:12px;font-weight:400;color:#000;letter-spacing:0px;transform:scaleX(0.9);transform-origin:0 0;">0</div>
<div class="t" style="left:480.60px;top:169.84px;font-size:12px;line-height:12px;font-weight:400;color:#000;letter-spacing:0px;transform:scaleX(0.9);transform-origin:0 0;">0</div>
</div>
<div style="position:absolute;left:657px;top:482px;width:16px;height:173px;background:#f0f0f0"></div>
<div style="position:absolute;left:657px;top:499px;width:15px;height:18px;background:#cdcdcd"></div>
<div style="position:absolute;left:146px;top:655px;width:511px;height:17px;background:#f0f0f0"></div>
<div style="position:absolute;left:163px;top:656px;width:144px;height:15px;background:#cdcdcd"></div>
<div style="position:absolute;left:657px;top:655px;width:16px;height:17px;background:#f0f0f0"></div>
<div style="position:absolute;left:680px;top:481px;width:200px;height:192px;background:#f0f0f0;border-top:1px solid #a0a0a0;border-left:1px solid #a0a0a0;border-right:1px solid #fff;border-bottom:1px solid #fff;box-sizing:border-box"></div>
<svg style="position:absolute;left:0;top:0" width="899" height="692"><path d="M126.2 83.2 L129.5 79.2 L132.8 83.2" fill="none" stroke="#606060" stroke-width="2.1"/><path d="M126.2 632.3 L129.5 636.3 L132.8 632.3" fill="none" stroke="#606060" stroke-width="2.1"/><path d="M661.2 493.2 L664.5 489.2 L667.8 493.2" fill="none" stroke="#606060" stroke-width="2.1"/><path d="M661.2 644.8 L664.5 648.8 L667.8 644.8" fill="none" stroke="#606060" stroke-width="2.1"/><path d="M156.2 660.2 L152.2 663.5 L156.2 666.8" fill="none" stroke="#606060" stroke-width="2.1"/><path d="M645.8 660.2 L649.8 663.5 L645.8 666.8" fill="none" stroke="#606060" stroke-width="2.1"/></svg>
<div style="position:absolute;left:886px;top:674px;width:2px;height:2px;background:#b4b4b4"></div>
<div style="position:absolute;left:883px;top:677px;width:2px;height:2px;background:#b4b4b4"></div>
<div style="position:absolute;left:886px;top:677px;width:2px;height:2px;background:#b4b4b4"></div>
<div style="position:absolute;left:880px;top:680px;width:2px;height:2px;background:#b4b4b4"></div>
<div style="position:absolute;left:883px;top:680px;width:2px;height:2px;background:#b4b4b4"></div>
<div style="position:absolute;left:886px;top:680px;width:2px;height:2px;background:#b4b4b4"></div>
</body></html>
